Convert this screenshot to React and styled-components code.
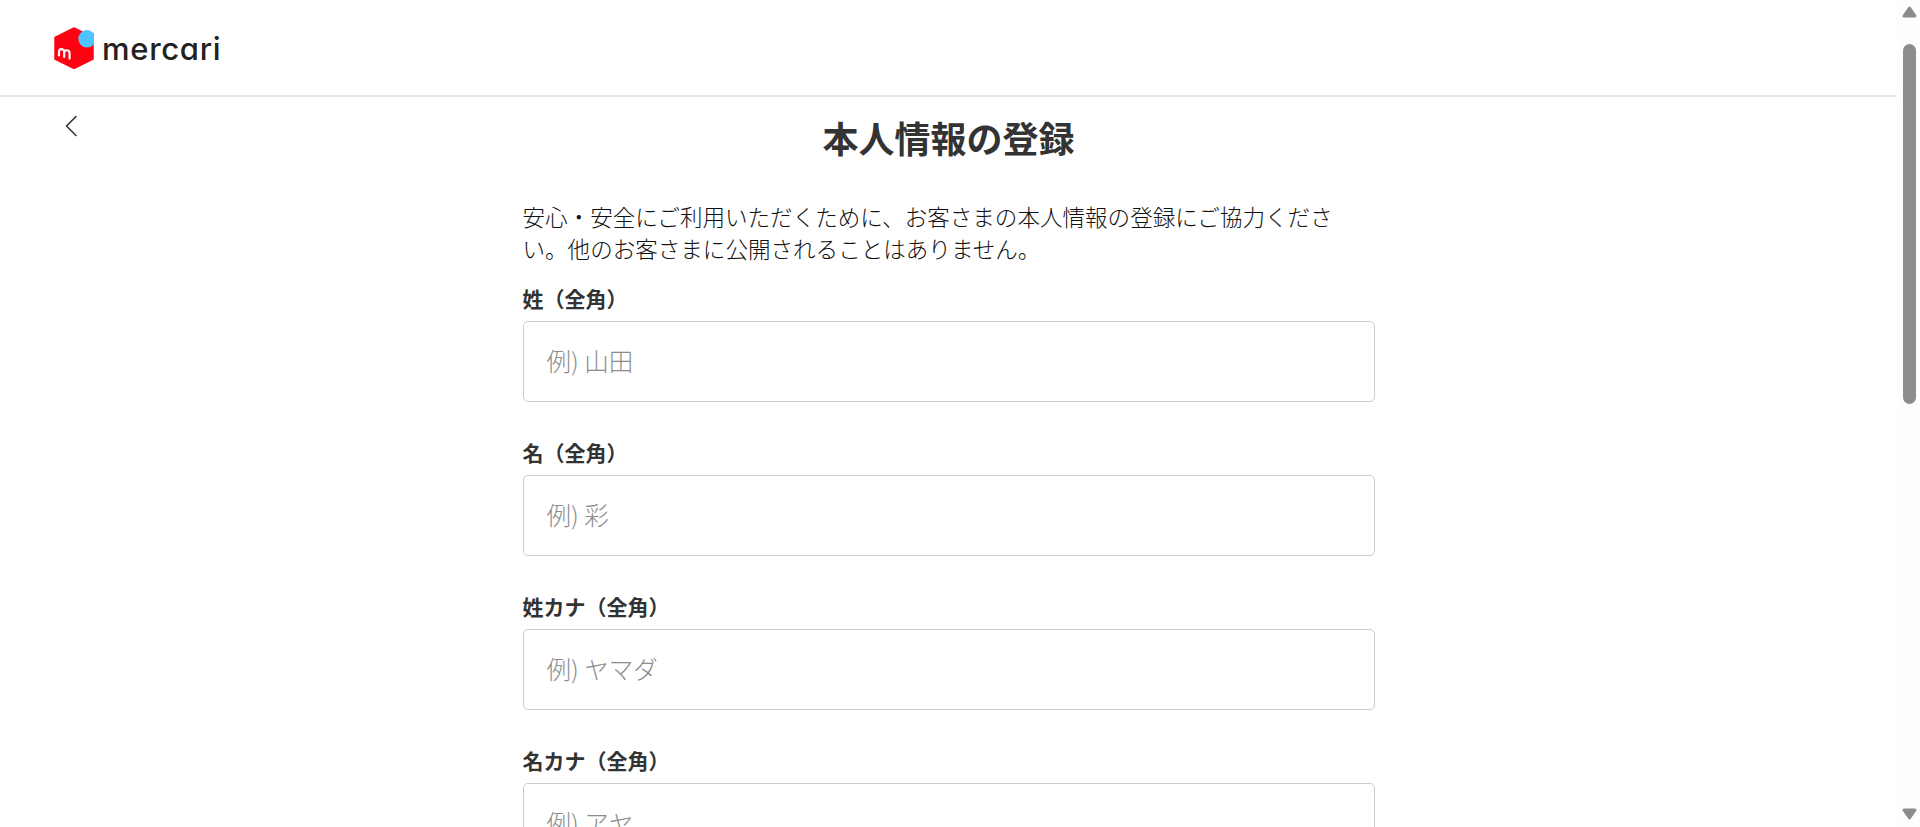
import React from "react";
import styled, { createGlobalStyle } from "styled-components";

const Global = createGlobalStyle`
  html, body { margin: 0; padding: 0; height: 100%; overflow: hidden; background: #fff; }
  #root { height: 100%; }
  * { box-sizing: border-box; }
`;

const Page = styled.div`
  display: flex;
  height: 100vh;
  font-family: "Noto Sans CJK JP", "Noto Sans", sans-serif;
  color: #333;
`;

const Main = styled.div`
  flex: 1;
  min-width: 0;
  height: 100%;
  overflow: hidden;
`;

const Header = styled.header`
  height: 97px;
  padding-left: 54px;
  display: flex;
  align-items: center;
  gap: 8px;
  border-bottom: 2px solid #e8e8e8;
`;

const LogoMark = styled.svg`
  width: 40px;
  height: 42px;
  flex: none;
`;

const Wordmark = styled.span`
  font-family: Inter, "Noto Sans", sans-serif;
  font-feature-settings: "cv11" 1;
  font-size: 31px;
  font-weight: 550;
  letter-spacing: 0.7px;
  line-height: 1;
  margin-top: 1px;
  color: #222;
`;

const TitleRow = styled.div`
  display: grid;
  grid-template-columns: 1fr auto 1fr;
  height: 90px;
`;

const BackButton = styled.button`
  justify-self: start;
  margin: 18px 0 0 60px;
  padding: 0;
  width: 22px;
  height: 24px;
  border: 0;
  background: none;
  color: #333;
`;

const Title = styled.h1`
  margin: 0;
  padding-top: 17px;
  font-size: 36px;
  line-height: 46px;
  font-weight: 700;
  color: #333;
`;

const Form = styled.form`
  width: 852px;
  margin: 13px auto 0;
`;

const Lead = styled.p`
  margin: 0 0 21px;
  padding-right: 24px;
  font-size: 22.55px;
  line-height: 32px;
  font-weight: 300;
  color: #111;
`;

const Field = styled.div`
  display: flex;
  flex-direction: column;
  margin-bottom: 37px;
`;

const Label = styled.label`
  font-size: 21px;
  font-weight: 700;
  line-height: 28px;
  margin-top: -1px;
  margin-bottom: 9px;
  color: #333;
`;

const Input = styled.input`
  height: 81px;
  width: 100%;
  padding: 0 23px 2px;
  border: 1px solid #ccc;
  border-radius: 5px;
  font: inherit;
  font-size: 24.5px;
  font-weight: 300;
  color: #333;
  background: #fff;
  &::placeholder { color: #8c8c8c; opacity: 1; }
`;

const Rail = styled.aside`
  width: 23px;
  flex: none;
  height: 100%;
  background: #fdfdfd;
  display: flex;
  flex-direction: column;
  align-items: center;
  padding: 6px 0 7px 1px;
`;

const Arrow = styled.svg`
  width: 15px;
  height: 12px;
  flex: none;
  fill: #8c8c8c;
  stroke: #8c8c8c;
  stroke-width: 3;
  stroke-linejoin: round;
`;

const Thumb = styled.div`
  width: 13px;
  height: 360px;
  margin-top: 26px;
  border-radius: 7px;
  background: #8c8c8c;
`;

const Spacer = styled.div`
  flex: 1;
`;

const fields = [
  ["姓（全角）", "例) 山田"],
  ["名（全角）", "例) 彩"],
  ["姓カナ（全角）", "例) ヤマダ"],
  ["名カナ（全角）", "例) アヤ"],
];

export default function App() {
  return (
    <>
      <Global />
      <Page>
        <Main>
          <Header>
            <LogoMark viewBox="0 0 40 42" aria-label="logo">
              <path d="M20 1 L39 10.5 V32 L20 41.5 L1 32 V10.5 Z" fill="#ff0211" stroke="#ff0211" strokeWidth="1.5" strokeLinejoin="round" />
              <circle cx="33" cy="11.8" r="8.7" fill="#4dc3ff" />
              <path d="M5 28.5 V24.5 C5 21 10.2 21.5 10.2 25 V30 M10.2 25.5 C10.2 22 15.6 22.8 15.6 26.2 V31.6" fill="none" stroke="#fff" strokeWidth="2.2" strokeLinecap="round" />
            </LogoMark>
            <Wordmark>mercari</Wordmark>
          </Header>
          <TitleRow>
            <BackButton type="button" aria-label="戻る">
              <svg width="12" height="22" viewBox="0 0 12 22" fill="none" stroke="currentColor" strokeWidth="1.6" strokeLinecap="round" strokeLinejoin="round">
                <path d="M11 1.5 L1.5 11 L11 20.5" />
              </svg>
            </BackButton>
            <Title>本人情報の登録</Title>
          </TitleRow>
          <Form>
            <Lead>安心・安全にご利用いただくために、お客さまの本人情報の登録にご協力ください。他のお客さまに公開されることはありません。</Lead>
            {fields.map(([label, placeholder]) => (
              <Field key={label}>
                <Label>{label}</Label>
                <Input placeholder={placeholder} />
              </Field>
            ))}
          </Form>
        </Main>
        <Rail>
          <Arrow viewBox="0 0 15 12"><path d="M7.5 2 L13 10 H2 Z" /></Arrow>
          <Thumb />
          <Spacer />
          <Arrow viewBox="0 0 15 12"><path d="M2 2 H13 L7.5 10 Z" /></Arrow>
        </Rail>
      </Page>
    </>
  );
}
